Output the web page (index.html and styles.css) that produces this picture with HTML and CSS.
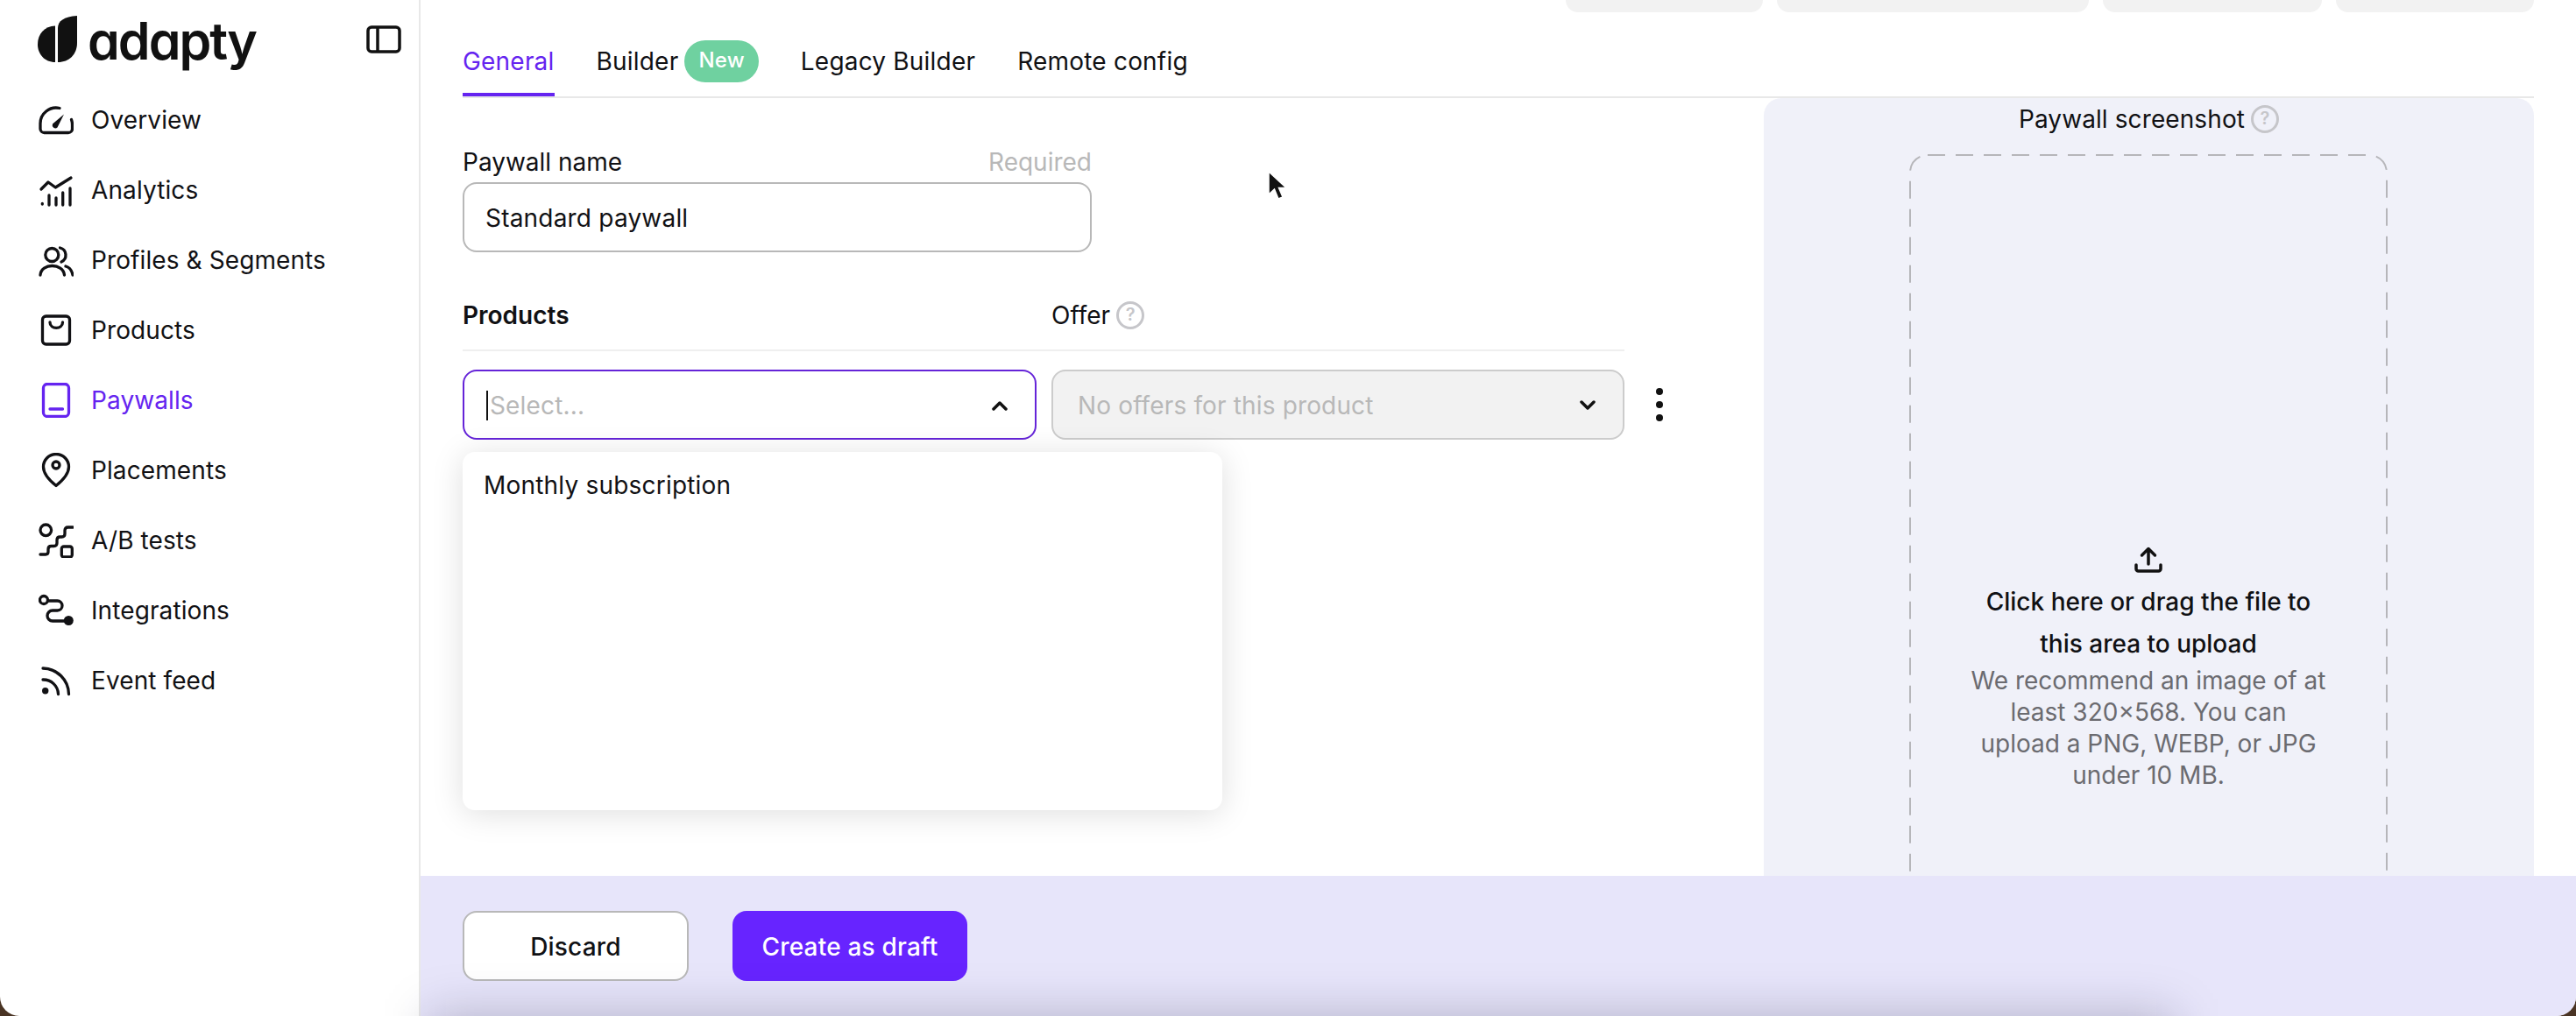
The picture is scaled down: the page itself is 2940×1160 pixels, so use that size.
FILE: index.html
```html
<!DOCTYPE html>
<html>
<head>
  <title>Adapty - New paywall</title>
  <link rel="stylesheet" href="styles.css">
</head>
<body>
  <div class="app">
    <aside class="sidebar">
      <div class="logo-row">
        <svg class="logo-mark" viewBox="0 0 46 54"><path d="M21 11.500V53C9 53 1 44 1 32.500C1 20.500 9 12 21 11.500Z"/><path d="M24 53V14C24 6 31 1 46 0V31C46 44 37 53 24 53Z"/></svg>
        <span class="logo-text">adapty</span>
        <svg class="collapse" viewBox="0 0 40 32"><rect x="2" y="2" width="36" height="28" rx="4"/><path d="M13 2V30"/></svg>
      </div>
      <nav class="nav">
        <a class="nav-item">
          <svg class="icon" viewBox="0 0 40 40"><path d="M24 6.500A18 18 0 0 0 2 24V30A4.500 4.500 0 0 0 6.500 34.500H34A4.500 4.500 0 0 0 38.500 30V26A18 18 0 0 0 37.500 19.500"/><path class="solid" d="M29 13.500L21.500 28.500A3.500 3.500 0 0 1 16 24.500Z"/></svg>
          Overview
        </a>
        <a class="nav-item">
          <svg class="icon" viewBox="0 0 40 40"><path d="M3 19L11 11L19.300 17L37 6"/><path d="M4.300 35.500V36M12 26V37M20 29V37M27.700 23V37M36 18V37"/></svg>
          Analytics
        </a>
        <a class="nav-item">
          <svg class="icon" viewBox="0 0 40 40"><circle cx="15.300" cy="14" r="7.500"/><path d="M24.500 6A8.500 8.500 0 0 1 26 22"/><path d="M2 37C3 23 28 23 29.500 37"/><path d="M31 27C35 28 38 32 39 37"/></svg>
          Profiles &amp; Segments
        </a>
        <a class="nav-item">
          <svg class="icon" viewBox="0 0 40 40"><rect x="4.500" y="4" width="31" height="32" rx="4"/><path d="M13 11C13 19.500 27.500 19.500 27.500 11"/></svg>
          Products
        </a>
        <a class="nav-item active">
          <svg class="icon" viewBox="0 0 40 40"><rect x="5.500" y="1.500" width="29" height="37" rx="4.500"/><path d="M13 30H27.500"/></svg>
          Paywalls
        </a>
        <a class="nav-item">
          <svg class="icon" viewBox="0 0 40 40"><path d="M20 37.500C15 33.500 5.500 25.500 5.500 16A14.500 14.500 0 0 1 34.500 16C34.500 25.500 25 33.500 20 37.500Z"/><circle cx="20" cy="14" r="4"/></svg>
          Placements
        </a>
        <a class="nav-item">
          <svg class="icon" viewBox="0 0 40 40"><circle cx="8.300" cy="8.300" r="6.300"/><rect x="26.300" y="27" width="12" height="12" rx="2.500"/><path d="M2 36H8Q11 36 11 33V30Q11 26.500 14.500 26.500H17.500Q21 26.500 21 23V19.500Q21 16 24.500 16H26.500Q30 16 30 12.500V8.500Q30 5 33.500 5H39"/></svg>
          A/B tests
        </a>
        <a class="nav-item">
          <svg class="icon" viewBox="0 0 40 40"><circle cx="6" cy="8" r="4.500"/><path d="M11 9H21.500A5.500 5.500 0 0 1 21.500 20H16A6 6 0 0 0 16 32H30"/><circle class="solid" cx="34.300" cy="31.500" r="5.500"/></svg>
          Integrations
        </a>
        <a class="nav-item">
          <svg class="icon" viewBox="0 0 40 40"><path d="M5 19A17 17 0 0 1 22.500 35.500"/><path d="M5 6A30 30 0 0 1 34.500 35.500"/><circle class="solid" cx="7.700" cy="31.700" r="3.700"/></svg>
          Event feed
        </a>
      </nav>
    </aside>

    <main class="main">
      <div class="top-actions">
        <span class="top-btn w1"></span>
        <span class="top-btn w2"></span>
        <span class="top-btn w3"></span>
        <span class="top-btn w4"></span>
      </div>
      <div class="tabs">
        <a class="tab active">General</a>
        <a class="tab">Builder <span class="pill">New</span></a>
        <a class="tab">Legacy Builder</a>
        <a class="tab">Remote config</a>
      </div>

      <div class="content">
        <section class="form">
          <div class="field-head">
            <span>Paywall name</span>
            <span class="required">Required</span>
          </div>
          <div class="input">Standard paywall</div>

          <div class="products-head">
            <span class="products-title">Products</span>
            <span class="offer-title">Offer <i class="help">?</i></span>
          </div>

          <div class="select-row">
            <div class="select-wrap">
              <div class="select focused">
                <span class="caret"></span>
                <span class="placeholder">Select...</span>
                <svg class="chevron" viewBox="0 0 20 12"><path d="M3 10L10 3L17 10"/></svg>
              </div>
              <div class="dropdown">
                <div class="option">Monthly subscription</div>
              </div>
            </div>
            <div class="select disabled">
              <span class="placeholder">No offers for this product</span>
              <svg class="chevron" viewBox="0 0 20 12"><path d="M3 2L10 9L17 2"/></svg>
            </div>
            <div class="kebab"><span></span><span></span><span></span></div>
          </div>
        </section>

        <section class="shot-panel">
          <div class="shot-title">Paywall screenshot <i class="help">?</i></div>
          <div class="dropzone">
            <svg class="dash" viewBox="0 0 546 1170"><rect x="1" y="1" width="544" height="1168" rx="20"/></svg>
            <svg class="upload" viewBox="0 0 32 30"><path d="M16 3V20M8.500 10L16 2.500L23.500 10"/><path d="M2 21V25.500A2.500 2.500 0 0 0 4.500 28H27.500A2.500 2.500 0 0 0 30 25.500V21"/></svg>
            <p class="drop-title">Click here or drag the file to this area to upload</p>
            <p class="drop-note">We recommend an image of at least 320×568. You can upload a PNG, WEBP, or JPG under 10 MB.</p>
          </div>
        </section>
      </div>

      <footer class="footer">
        <button class="btn">Discard</button>
        <button class="btn primary">Create as draft</button>
      </footer>
    </main>

    <svg class="cursor" viewBox="0 0 24 34"><path d="M2 1V27L8.500 21L13 32L18 30L13.500 19.500H22Z"/></svg>
    <div class="dock-shadow"></div>
  </div>
</body>
</html>
```

FILE: styles.css
```css
* {
  box-sizing: border-box;
}

body {
  margin: 0;
  height: 1160px;
  overflow: hidden;
  background-color: #4a3424;
  font-family: Inter, "Noto Sans", sans-serif;
  font-size: 28px;
  letter-spacing: 0.2px;
  color: #111114;
}

.app {
  position: relative;
  display: flex;
  height: 1160px;
  background-color: #fff;
  border-radius: 0 0 22px 22px;
  overflow: hidden;
}

/* sidebar */
.sidebar {
  width: 480px;
  flex-shrink: 0;
  border-right: 2px solid #e8e8e8;
}

.logo-row {
  display: flex;
  align-items: center;
  height: 97px;
  padding: 0 20px 4px 42px;
}

.logo-mark {
  width: 46px;
  height: 54px;
  margin-top: -4px;
  fill: #111;
}

.logo-text {
  margin-left: 12px;
  font-size: 59px;
  line-height: 96px;
  font-weight: 600;
  letter-spacing: -2px;
  font-feature-settings: "cv11";
  color: #111;
}

.collapse {
  width: 40px;
  height: 32px;
  margin-left: auto;
  margin-top: -4px;
  fill: none;
  stroke: #111;
  stroke-width: 3.500;
}

.nav-item {
  display: flex;
  align-items: center;
  gap: 20px;
  height: 80px;
  padding-left: 44px;
  line-height: 34px;
  letter-spacing: 0.1px;
}

.nav-item.active {
  color: #6524f0;
}

.icon {
  width: 40px;
  height: 40px;
  flex-shrink: 0;
  fill: none;
  stroke: currentColor;
  stroke-width: 3.300;
  stroke-linecap: round;
  stroke-linejoin: round;
}

.icon .solid {
  fill: currentColor;
  stroke: none;
}

/* main column */
.main {
  flex: 1;
  display: flex;
  flex-direction: column;
  min-width: 0;
}

.top-actions {
  display: flex;
  justify-content: flex-end;
  gap: 16px;
  height: 14px;
  padding-right: 48px;
}

.top-btn {
  background-color: #f2f2f2;
  border-radius: 0 0 16px 16px;
}

.w1 { width: 225px; }
.w2 { width: 356px; }
.w3 { width: 250px; }
.w4 { width: 226px; }

.tabs {
  display: flex;
  align-items: flex-start;
  gap: 48px;
  height: 98px;
  margin: 0 48px;
  border-bottom: 2px solid #e8e8e8;
}

.tab {
  display: flex;
  align-items: center;
  height: 96px;
  padding-top: 20px;
  border-bottom: 4px solid transparent;
  white-space: pre;
}

.tab.active {
  color: #6524f0;
  border-bottom-color: #6524f0;
}

.pill {
  padding: 0 16px;
  height: 48px;
  line-height: 46px;
  margin-left: -1px;
  border-radius: 24px;
  background-color: #6fd1a0;
  color: #fff;
  font-size: 24px;
  font-weight: 500;
}

.content {
  flex: 1;
  display: flex;
  justify-content: space-between;
  min-height: 0;
  padding-right: 48px;
}

/* form */
.form {
  width: 1480px;
  padding: 56px 0 0 48px;
}

.field-head {
  display: flex;
  justify-content: space-between;
  width: 718px;
  line-height: 34px;
  margin-bottom: 6px;
  letter-spacing: 0;
}

.required {
  color: #b8b8b8;
}

.input {
  width: 718px;
  height: 80px;
  padding: 0 24px;
  line-height: 78px;
  border: 2px solid #b8b8b8;
  border-radius: 16px;
}

.products-head {
  display: flex;
  width: 1326px;
  margin-top: 55px;
  padding-bottom: 22px;
  border-bottom: 2px solid #efefef;
  line-height: 34px;
  letter-spacing: 0;
}

.products-title {
  width: 672px;
  font-weight: 600;
}

.offer-title {
  display: flex;
  align-items: center;
  gap: 7px;
}

.help {
  display: inline-block;
  width: 32px;
  height: 32px;
  border: 3.500px solid #c6c6ca;
  border-radius: 50%;
  color: #c6c6ca;
  font-size: 20px;
  font-style: normal;
  font-weight: 600;
  line-height: 25px;
  text-align: center;
}

.select-row {
  display: flex;
  gap: 17px;
  margin-top: 21px;
}

.select-wrap {
  position: relative;
  width: 655px;
  flex-shrink: 0;
}

.select {
  display: flex;
  align-items: center;
  width: 654px;
  height: 80px;
  flex-shrink: 0;
  padding: 2px 12px 0 28px;
  border: 2px solid #ccc;
  border-radius: 16px;
  letter-spacing: 0.15px;
}

.select.focused {
  width: 655px;
  padding-left: 25px;
  border-color: #6524d8;
}

.select.disabled {
  background-color: #f2f2f2;
}

.caret {
  width: 2px;
  height: 34px;
  margin-right: 2px;
  background-color: #111;
}

.placeholder {
  flex: 1;
  color: #b8b8b8;
}

.chevron {
  width: 20px;
  height: 12px;
  margin-right: 18px;
  fill: none;
  stroke: #111;
  stroke-width: 3.500;
  stroke-linecap: round;
  stroke-linejoin: round;
}

.dropdown {
  position: absolute;
  top: 94px;
  left: 0;
  width: 867px;
  height: 409px;
  padding: 21px 24px;
  background-color: #fff;
  border-radius: 14px;
  box-shadow: 0 4px 36px rgba(0, 0, 0, 0.13);
}

.option {
  line-height: 34px;
}

.kebab {
  display: flex;
  flex-direction: column;
  justify-content: center;
  gap: 7px;
  margin-left: 19px;
}

.kebab span {
  width: 8px;
  height: 8px;
  border-radius: 50%;
  background-color: #111;
}

/* screenshot panel */
.shot-panel {
  width: 879px;
  padding-top: 7px;
  overflow: hidden;
  background-color: #f0f1f9;
  border-radius: 20px 20px 0 0;
}

.shot-title {
  display: flex;
  justify-content: center;
  align-items: center;
  gap: 7px;
  height: 34px;
  letter-spacing: 0.1px;
}

.dropzone {
  position: relative;
  display: flex;
  flex-direction: column;
  align-items: center;
  justify-content: center;
  width: 546px;
  height: 1170px;
  margin: 23px 0 0 166px;
  padding-top: 4px;
  letter-spacing: 0;
}

.dash {
  position: absolute;
  top: 0;
  left: 0;
  width: 546px;
  height: 1170px;
  fill: none;
  stroke: #b6b6ba;
  stroke-width: 2;
  stroke-dasharray: 20 12;
}

.upload {
  width: 32px;
  height: 30px;
  fill: none;
  stroke: #111;
  stroke-width: 3.500;
  stroke-linecap: round;
  stroke-linejoin: round;
}

.drop-title {
  width: 400px;
  margin: 9px 0 0;
  line-height: 48px;
  text-align: center;
  font-weight: 500;
}

.drop-note {
  width: 410px;
  margin: 0;
  line-height: 36px;
  text-align: center;
  color: #6b6b70;
}

/* footer */
.footer {
  display: flex;
  align-items: center;
  gap: 50px;
  height: 160px;
  flex-shrink: 0;
  padding-left: 48px;
  background-color: #e7e5fa;
}

.btn {
  height: 80px;
  width: 258px;
  padding-top: 2px;
  border: 2px solid #b8b8b8;
  border-radius: 16px;
  background-color: #fff;
  font-family: inherit;
  font-size: 28px;
  font-weight: 500;
  letter-spacing: 0.2px;
  color: #111114;
}

.btn.primary {
  width: 268px;
  border: none;
  background-color: #6724ff;
  color: #fff;
}

/* floating bits */
.cursor {
  position: absolute;
  top: 195px;
  left: 1446px;
  width: 24px;
  height: 34px;
  fill: #111;
  stroke: #fff;
  stroke-width: 1.500;
}

.dock-shadow {
  position: absolute;
  left: 490px;
  top: 1160px;
  width: 1990px;
  height: 100px;
  background-color: rgba(10, 10, 40, 0.24);
  filter: blur(28px);
  pointer-events: none;
}
```
